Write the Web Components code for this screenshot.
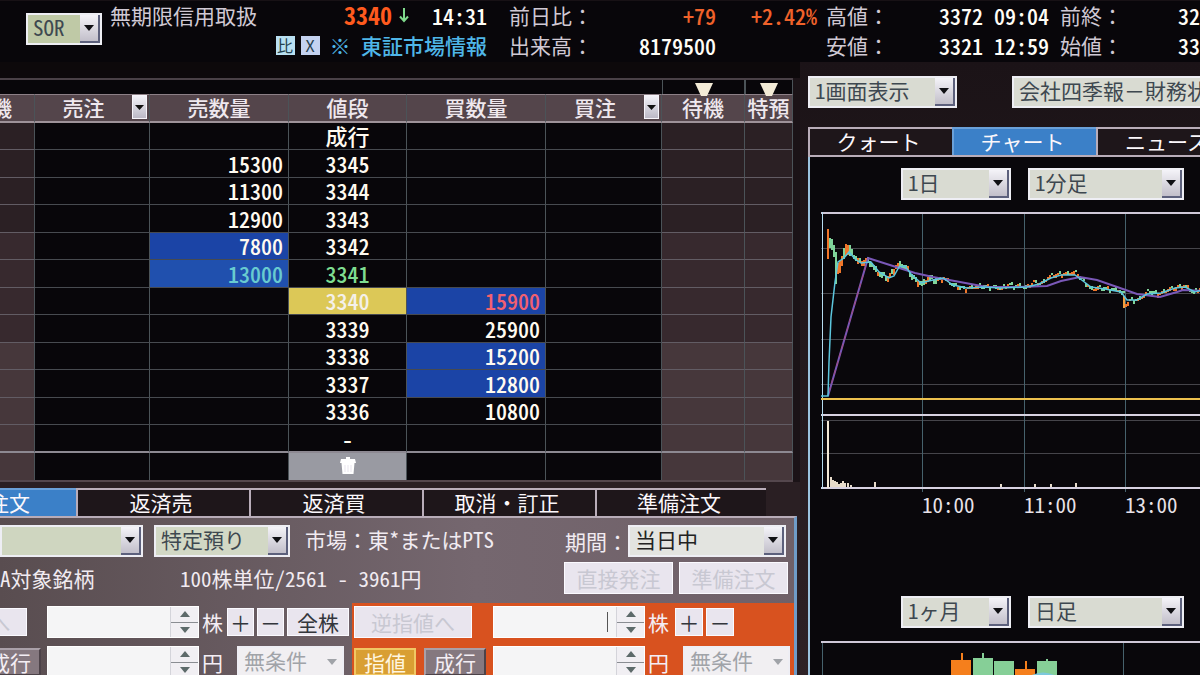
<!DOCTYPE html>
<html lang="ja">
<head>
<meta charset="utf-8">
<title>無期限信用取扱</title>
<style>
  html, body { margin: 0; min-height: 100%; background: #1b1317; }
  body {
    font-family: "Noto Sans CJK JP", "Liberation Sans", sans-serif;
    font-size: 21px; line-height: 28px; color: #d0c9d4;
    font-feature-settings: "hwid";
    overflow: hidden;
  }
</style>
</head>
<body>
<trade-app></trade-app>
<script>
function define(name, render) {
  customElements.define(name, class extends HTMLElement {
    connectedCallback() {
      if (this.shadowRoot) return;
      this.attachShadow({ mode: 'open' }).innerHTML = render(this);
    }
  });
}

/* Drop-down with a raised arrow button; optional caption in front */
define('ui-select', el => `
<style>
  :host { display: flex; align-items: center; flex: none; }
  .box { position: relative; flex: 1; min-width: 0; height: 32px; }
  select {
    appearance: none; box-sizing: border-box; width: 100%; height: 32px; margin: 0;
    border: 2px solid #eeeef4; border-radius: 0; padding: 0 24px 4px 5px;
    background: var(--select-bg, #d9dbd2); color: var(--select-ink, #3e4850);
    font: inherit; line-height: 24px; outline: none; opacity: 1; font-feature-settings: inherit;
  }
  :host([full]) select { font-feature-settings: normal; }
  i {
    position: absolute; right: 2px; top: 2px; bottom: 2px; width: 20px; box-sizing: border-box;
    display: grid; place-items: center; pointer-events: none;
    background: linear-gradient(#f4f3f8, #c2bfca);
    border-right: 2px solid #5c607c; border-bottom: 2px solid #5c607c;
  }
  :host([disabled]) i { background: none; border: 0; }
  label { white-space: nowrap; font-feature-settings: normal; }
</style>
${el.hasAttribute('caption') ? `<label for="s">${el.getAttribute('caption')}</label>` : ''}
<span class="box"><select id="s" aria-label="${el.getAttribute('label') || el.getAttribute('caption')}" ${el.hasAttribute('disabled') ? 'disabled' : ''}><option>${el.getAttribute('value') || ''}</option></select>
<i><svg width="10" height="6"><path d="M0 0H10L5 6Z" fill="${el.hasAttribute('disabled') ? '#a0a3a8' : '#101014'}"/></svg></i></span>`);

/* Number box with stepper buttons and its unit */
define('ui-stepper', el => `
<style>
  :host { display: flex; align-items: center; flex: none; gap: 3px; color: #f4eef4; }
  .box { display: flex; width: 152px; height: 32px; background: #f5f5f6; box-sizing: border-box; border: 1px solid #fff; }
  input { flex: 1; min-width: 0; border: 0; padding: 0 8px; background: none; font: inherit; text-align: right; outline: none; }
  :host([caret]) input { background: linear-gradient(#555, #555) right 8px center / 1px 20px no-repeat; }
  .steps { width: 27px; display: grid; grid-template-rows: 1fr 1fr; row-gap: 1px; background: #8a8d92; border-left: 1px solid #d4d4da; }
  button { border: 0; padding: 0; background: #f1eff3; display: grid; place-items: center; }
</style>
<span class="box"><input id="n" type="text" inputmode="numeric">
<span class="steps"><button aria-label="増やす"><svg width="10" height="6"><path d="M0 6H10L5 0Z" fill="#5d6a6a"/></svg></button><button aria-label="減らす"><svg width="10" height="6"><path d="M0 0H10L5 6Z" fill="#5d6a6a"/></svg></button></span></span>
<label for="n">${el.getAttribute('unit')}</label>`);

define('ui-button', el => `
<style>
  :host { display: block; flex: none; height: 28px; }
  button {
    width: 100%; height: 100%; padding: 0; margin: 0; border: 1px solid #fbfaff; box-sizing: border-box;
    display: grid; place-items: center; font: inherit; line-height: 24px; white-space: nowrap;
    background: #e9e5ee; color: #33363c; font-feature-settings: normal;
  }
  :host([disabled]) button { color: #c8c8d2; }
  :host([kind=amber]) button { background: #d99f33; color: #fff6e0; border: 2px solid #f0c864; }
  :host([kind=grey]) button { background: #85787f; color: #f4eef4; border: 2px solid; border-color: #aaa0a8 #4c4248 #4c4248 #aaa0a8; }
</style>
<button ${el.hasAttribute('disabled') ? 'disabled' : ''}><slot></slot></button>`);

define('ui-tab', el => `
<style>
  :host { display: block; min-width: 0; }
  button {
    width: 100%; height: 28px; box-sizing: border-box; padding: 0 5px 2px 0; margin: 0; font: inherit; line-height: 24px;
    border: 0; border-top: 2px solid #b9adb9; border-left: 2px solid #b9adb9;
    background: #1e161a; color: #fbf7fb; white-space: nowrap; text-align: center;
  }
  :host([active]) button { background: #3b80c8; border-color: #6aa0d8; }
  :host([cut]) button { text-align: right; padding-right: 46px; }
</style>
<button role="tab" aria-selected="${el.hasAttribute('active')}"><slot></slot></button>`);

define('quote-header', () => `
<style>
  :host {
    display: grid; box-sizing: border-box; height: 62px; background: #08060a;
    grid-template-columns: 76px 377px 207px 101px 223px 1fr;
    column-gap: 0; padding-left: 26px; border-top: 1px solid #171115;
  }
  ui-select { --select-bg: #bfc9a6; margin-top: 12px; align-self: start; }
  .cell { display: grid; grid-template-rows: 28px 32px; }
  .main { margin-left: 8px; margin-right: -8px; }
  .a { margin-left: 30px; margin-right: -30px; }
  .c { margin-left: 30px; margin-right: -30px; }
  .d { margin-left: 39px; margin-right: -39px; }
  .e { margin-left: 50px; }
  .line { display: flex; justify-content: space-between; align-items: center; white-space: nowrap; line-height: 28px; }
  .line > span:first-child:not(.n) { font-feature-settings: normal; }
  .end { justify-content: flex-end; }
  b, .n { color: #fffdf6; font-size: 22px; font-weight: 500; }
  .orange { color: #f0622a; }
  .price { color: #ff5a1e; font-size: 24px; font-weight: 700; margin-right: 6px; font-feature-settings: "hwid"; }
  .price-group { display: flex; align-items: center; }
  .time { margin-left: 22px; }
  .news { color: #4fb6e8; font-weight: 500; text-decoration: none; margin-left: 10px; }
  .tag {
    border: 0; padding: 0; width: 19px; height: 19px; margin-left: 6px;
    background: #b9e0f2; color: #24404e; font: inherit; font-size: 16px; line-height: 18px; text-align: center;
  }
  .x { background: #c4d2f0; font-feature-settings: normal; }
</style>
<ui-select label="執行市場" value="SOR"></ui-select>
<div class="cell main">
  <div class="line"><span>無期限信用取扱</span><span class="price-group"><b class="price">3340</b>
    <svg width="12" height="16" viewBox="0 0 12 16"><path d="M6 1V14M2 9.500L6 14L10 9.500" fill="none" stroke="#7fd98c" stroke-width="2"/></svg>
    <span class="n time">14:31</span></span></div>
  <div class="line end"><button class="tag">比</button><button class="tag x">X</button><a class="news" href="#">※ 東証市場情報</a></div>
</div>
<div class="cell a">
  <div class="line"><span>前日比：</span><span class="n orange">+79</span></div>
  <div class="line"><span>出来高：</span><span class="n">8179500</span></div>
</div>
<div class="cell c"><div class="line end"><span class="n orange">+2.42%</span></div></div>
<div class="cell d">
  <div class="line"><span>高値：</span><span class="n">3372 09:04</span></div>
  <div class="line"><span>安値：</span><span class="n">3321 12:59</span></div>
</div>
<div class="cell e">
  <div class="line"><span>前終：</span><span class="n">32</span></div>
  <div class="line"><span>始値：</span><span class="n">33</span></div>
</div>`);

const LADDER = [
  ['', '成行', ''],
  ['15300', '3345', ''], ['11300', '3344', ''], ['12900', '3343', ''],
  ['7800', '3342', '', 'blue'], ['13000', '3341', '', 'azure', 'up'],
  ['', '3340', '15900', '', 'now', 'blue red'],
  ['', '3339', '25900'], ['', '3338', '15200', '', '', 'blue'],
  ['', '3337', '12800', '', '', 'blue'], ['', '3336', '10800'], ['', '-', '']
];

define('price-ladder', () => `
<style>
  :host { display: block; overflow: hidden; padding-top: 16px; background: linear-gradient(#0d090b 0 16px, #1b1317 0); }
  table {
    table-layout: fixed; border-collapse: separate; border-spacing: 0;
    width: calc(100% + 42px); margin-left: -49px; border-top: 2px solid #4a4147;
    border-bottom: 2px solid #54474d; box-sizing: border-box;
    background: #08060a;
  }
  th, td { padding: 0; line-height: 24px; box-sizing: border-box; border-right: 1px solid #4b5358; white-space: nowrap; }
  .marks th { height: 14px; line-height: 0; border-right-color: transparent; vertical-align: bottom; }
  .marks .on { border-right-color: #4b5358; border-left: 1px solid #4b5358; }
  .marks svg { display: block; margin: 0 auto; position: relative; z-index: 1; margin-bottom: -3px; }
  .names th {
    height: 29px; background: #54454b; color: #efe8ee; font-weight: 500;
    border-top: 1px solid #8d8087; border-bottom: 2px solid #9e9299; padding-bottom: 2px;
  }
  .names .cut { text-align: right; padding-right: 22px; }
  .pick { position: relative; }
  .pick span { margin-right: 17px; }
  .pick button {
    position: absolute; right: 2px; top: 0; width: 15px; height: 24px; border: 1px solid #f6f4fa; padding: 0;
    background: linear-gradient(#f3f2f8, #bcb9c6); display: grid; place-items: center;
  }
  tbody td { height: 27px; padding-bottom: 2px; border-bottom: 1px solid #474a50; color: #fffaf0; font-size: 22px; font-weight: 500; text-align: center; }
  tbody tr:nth-child(even) td { height: 28px; }
  tbody .q { text-align: right; padding-right: 5px; }
  tbody .side { background: #2b2024; border-bottom-color: #625c64; }
  tbody tr:nth-child(n+5) .side { background: #37292e; }
  tbody tr:nth-child(n+9) .side { background: #46373b; }
  tbody .blue { background: #1b44a6; }
  tbody .azure { background: #2050ae; color: #68cbd0; }
  tbody .red { color: #f26070; }
  tbody .up { color: #7edc90; }
  tbody .now { background: #dcc857; color: #f4f0ea; }
  tbody tr:nth-child(12) td { border-bottom: 2px solid #8d8992; padding-bottom: 1px; }
  tbody tr:last-child td { border-bottom: 0; }
  tbody .bin { background: #999aa2; }
  .bin svg { display: block; margin: 0 auto; }
</style>
<table>
  <colgroup><col style="width:84px"><col style="width:115px"><col style="width:139px"><col style="width:118px"><col style="width:139px"><col style="width:116px"><col style="width:83px"><col style="width:48px"></colgroup>
  <thead>
    <tr class="marks"><th></th><th></th><th></th><th></th><th></th><th></th>${'<th class="on"><svg width="18" height="14"><path d="M0 0H18L12 13H6Z" fill="#f2ead6"/></svg></th>'.repeat(2)}</tr>
    <tr class="names"><th class="cut">機</th>
      <th class="pick"><span>売注</span><button aria-label="売注"><svg width="9" height="5"><path d="M0 0H9L4.500 5Z" fill="#111"/></svg></button></th>
      <th>売数量</th><th>値段</th><th>買数量</th>
      <th class="pick"><span>買注</span><button aria-label="買注"><svg width="9" height="5"><path d="M0 0H9L4.500 5Z" fill="#111"/></svg></button></th>
      <th>待機</th><th>特預</th></tr>
  </thead>
  <tbody>
    ${LADDER.map(([s, p, b, sc = '', pc = '', bc = '']) => `<tr><td class="side"></td><td></td><td class="q ${sc}">${s}</td><td class="${pc}">${p}</td><td class="q ${bc}">${b}</td><td></td><td class="side"></td><td class="side"></td></tr>`).join('')}
    <tr><td class="side"></td><td></td><td></td><td class="bin"><svg width="16" height="17"><path d="M6 0H10V2H15L16 6H0L1 2H6ZM1.500 6H14.500L13.500 17H2.500Z" fill="#fff"/><path d="M5 8V15M8 8V15M11 8V15" stroke="#e9e5ee"/></svg></td><td></td><td></td><td class="side"></td><td class="side"></td></tr>
  </tbody>
</table>`);

define('order-form', () => `
<style>
  :host { display: block; overflow: hidden; padding-right: 3px; background: #2a1f23; color: #f1ebf1; }
  .tabs { display: grid; grid-template-columns: 173px 173px 173px 173px 171px 1fr; margin-left: -97px; padding-top: 6px; }
  .panel { background: linear-gradient(90deg, #594d50, #75676f 60%, #6f6068); border-top: 2px solid #b8acb8; border-right: 3px solid #6f9cc8; height: 220px; }
  .row { display: flex; align-items: center; white-space: nowrap; }
  .r1 { height: 38px; padding: 4px 8px 0 0; }
  .r1 > span { margin-bottom: 4px; }
  .full { font-feature-settings: normal; }
  .acct { width: 143px; margin-right: 11px; --select-bg: #cfd6c0; }
  .kind { width: 136px; margin-right: 15px; --select-bg: #d2d8c5; }
  .term { width: 221px; margin-left: auto; --select-bg: #e3e4e0; --select-ink: #222; }
  .r2 { height: 34px; padding: 1px 6px 8px 0; gap: 6px; }
  .name { width: 174px; flex: none; }
  .r2 ui-button { width: 109px; height: 32px; }
  .push { margin-left: auto; }
  .sides { display: grid; grid-template-columns: 352px 1fr; }
  .side { display: grid; grid-template-rows: 32px 32px; row-gap: 8px; padding: 3px 2px 12px 0; }
  .buy { background: #d8521f; padding-left: 2px; }
  .left { width: 62px; margin-left: -21px; margin-right: 6px; }
  .left.cut { width: 54px; margin-left: -27px; margin-right: 20px; }
  .pm { width: 28px; margin-right: 3px; }
  .sell .pm { width: 27px; }
  .first { margin-left: 4px; }
  .buy .first { margin-left: 6px; }
  .all { width: 62px; }
  .cond { width: 107px; margin-left: 14px; --select-bg: #f1eff2; --select-ink: #a0a3a8; }
  .back { width: 118px; height: 32px; margin-right: 21px; }
  .fix { width: 62px; margin-right: 8px; }
  .mkt { width: 62px; margin-right: 7px; }
</style>
<div class="tabs" role="tablist"><ui-tab active cut>注文</ui-tab><ui-tab>返済売</ui-tab><ui-tab>返済買</ui-tab><ui-tab>取消・訂正</ui-tab><ui-tab>準備注文</ui-tab></div>
<div class="panel">
  <div class="row r1"><ui-select class="acct" label="取引区分"></ui-select><ui-select class="kind" label="預り区分" value="特定預り"></ui-select><span class="full">市場：</span><span>東*またはPTS</span><ui-select class="term" caption="期間：" value="当日中"></ui-select></div>
  <div class="row r2"><span class="name">A対象銘柄</span><span>100株単位/2561 - 3961円</span><ui-button class="push" disabled>直接発注</ui-button><ui-button disabled>準備注文</ui-button></div>
  <div class="sides">
    <div class="side sell">
      <div class="row"><ui-button class="left cut" disabled>へ</ui-button><ui-stepper unit="株"></ui-stepper><ui-button class="pm first">＋</ui-button><ui-button class="pm">－</ui-button><ui-button class="all">全株</ui-button></div>
      <div class="row"><ui-button class="left" kind="grey">成行</ui-button><ui-stepper unit="円"></ui-stepper><ui-select class="cond" disabled label="執行条件" value="無条件"></ui-select></div>
    </div>
    <div class="side buy">
      <div class="row"><ui-button class="back" disabled>逆指値へ</ui-button><ui-stepper caret unit="株"></ui-stepper><ui-button class="pm first">＋</ui-button><ui-button class="pm">－</ui-button></div>
      <div class="row"><ui-button class="fix" kind="amber">指値</ui-button><ui-button class="mkt" kind="grey">成行</ui-button><ui-stepper unit="円"></ui-stepper><ui-select class="cond" disabled label="執行条件" value="無条件"></ui-select></div>
    </div>
  </div>
</div>`);

/* One-minute price path, [x, y] in chart pixels */
const PATH = [[6,28],[11,33],[15,56],[19,53],[24,36],[29,40],[37,50],[47,49],[56,61],[67,66],[74,55],[79,52],[86,58],[94,69],[101,72],[107,66],[116,69],[122,66],[129,72],[142,77],[159,74],[179,76],[186,73],[206,75],[212,70],[219,72],[229,64],[239,62],[255,61],[261,68],[269,77],[279,76],[296,78],[302,82],[303,93],[309,88],[317,88],[327,79],[337,82],[349,77],[362,74],[372,80],[379,76],[440,74]];
const AVG5 = '0,184 7,184 8,150 10,105 14,70 17,50 23,46 28,40 34,47 40,51 50,50 58,60 68,66 73,64 78,55 84,54 90,62 100,71 112,68 122,66 132,73 146,76 162,75 180,76 206,75 218,72 230,66 240,63 254,63 262,69 270,75 284,77 300,80 306,88 316,88 326,82 340,81 354,76 364,75 374,80 384,77';
const AVG25 = '7,184 47,46 72,54 94,61 112,65 139,70 166,75 196,75 226,74 240,69 259,65 276,68 299,76 316,82 339,85 356,80 362,78 384,79';

function candles() {
  let out = '', seg = 0;
  for (let x = 6, i = 0; x < 400; x += 2, i++) {
    while (seg < PATH.length - 2 && PATH[seg + 1][0] < x) seg++;
    const [x0, y0] = PATH[seg], [x1, y1] = PATH[seg + 1];
    const y = y0 + (y1 - y0) * (x - x0) / (x1 - x0);
    const wide = x < 30 ? 6 : x < 115 ? 3 : 2;
    const a = Math.round(y - wide + (i * 7 % 4) - 1), h = wide * 2 - (i * 5 % 3);
    const rise = y1 < y0 ? i % 4 !== 0 : i % 5 === 0;
    out += `<rect x="${x}" y="${a}" width="2" height="${Math.max(2, h)}" fill="${rise ? '#f0762a' : '#7fd39a'}"/>`;
  }
  return out;
}
const hline = (y, c, w = 1) => `<rect x="0" y="${y}" width="100%" height="${w}" fill="${c}"/>`;
const vline = (x, y, h) => `<rect x="${x}" y="${y}" width="1" height="${h}" fill="#46616c"/>`;

define('minute-chart', () => `
<style>
  :host { display: block; }
  svg { display: block; width: 100%; height: 308px; }
  text { font: inherit; fill: #e8e2e8; }
</style>
<svg role="img" aria-label="1分足チャート">
  ${[36, 81, 127, 172, 208, 241].map(y => hline(y, '#45444a')).join('')}
  ${[101, 203, 304].map(x => vline(x, 2, 278)).join('')}
  ${hline(0, '#cfc8d8', 2)}${hline(202, '#d8d2e2', 2)}${hline(275, '#d8d2e2', 2)}
  <rect x="1" y="0" width="1" height="277" fill="#b6dcf0"/>
  ${hline(186, '#edc14e', 2)}
  <rect x="6" y="17" width="2" height="30" fill="#f0762a"/><rect x="14" y="40" width="2" height="32" fill="#7fd39a"/>
  ${candles()}<rect x="302" y="84" width="2" height="12" fill="#f0a040"/>
  <polyline points="${AVG25}" fill="none" stroke="#7a58b8" stroke-width="2"/>
  <path d="M8 180L46 50" stroke="#a04a80" stroke-width="1" stroke-dasharray="5 4"/>
  <polyline points="${AVG5}" fill="none" stroke="#5cc6de" stroke-width="1.500"/>
  <rect x="6" y="209" width="2" height="67" fill="#f4ead8"/>
  ${[[9,10],[11,7],[13,6],[15,5],[17,3],[19,4],[21,6],[23,4],[26,4],[29,2],[53,5],[179,3],[213,3],[229,3],[254,4]].map(([x, h]) => `<rect x="${x}" y="${275 - h}" width="2" height="${h}" fill="#e8dccb"/>`).join('')}
  <text x="101" y="301">10:00</text><text x="203" y="301">11:00</text><text x="304" y="301">13:00</text>
</svg>`);

define('daily-chart', () => `
<style>
  :host { display: block; }
  svg { display: block; width: 100%; height: 60px; }
</style>
<svg role="img" aria-label="日足チャート">
  ${vline(1, 0, 60)}${vline(302, 0, 60)}${hline(0, '#cfc8d8', 2)}
  <path d="M130 19H150V60H130ZM140 12H142V19H140ZM194 28H214V60H194ZM204 20H206V28H204Z" fill="#f57f1c"/>
  <path d="M152 17H172V60H152ZM161 12H163V17H161ZM173 20H193V60H173ZM216 20H236V60H216ZM225 18H227V20H225Z" fill="#86cf97"/>
  <path d="M210 36Q222 30 234 36" fill="none" stroke="#7cc8dc" stroke-width="3"/>
</svg>`);

define('chart-panel', () => `
<style>
  :host { display: flex; flex-direction: column; overflow: hidden; padding-left: 8px; background: linear-gradient(#1b1317, #302327); }
  .top { display: flex; gap: 55px; padding: 14px 0 19px; }
  .view { width: 149px; }
  .info { width: 240px; }
  .tabs { display: grid; grid-template-columns: 144px 144px 144px; border-bottom: 2px solid #b9adb9; }
  .body { flex: 1; background: #09070b; border-left: 2px solid #9cc4e0; padding: 11px 0 0 11px; }
  .pick { display: flex; gap: 17px; margin-left: 80px; }
  .pick > :first-child { width: 110px; }
  .pick > :last-child { width: 156px; }
  minute-chart { margin-top: 12px; }
  .second { margin-top: 76px; }
  daily-chart { margin-top: 13px; }
</style>
<div class="top"><ui-select class="view" label="画面表示" value="1画面表示"></ui-select><ui-select class="info" full label="企業情報" value="会社四季報－財務状"></ui-select></div>
<div class="tabs" role="tablist"><ui-tab>クォート</ui-tab><ui-tab active>チャート</ui-tab><ui-tab>ニュース</ui-tab></div>
<div class="body">
  <div class="pick"><ui-select label="期間" value="1日"></ui-select><ui-select label="足種" value="1分足"></ui-select></div>
  <minute-chart></minute-chart>
  <div class="pick second"><ui-select label="期間" value="1ヶ月"></ui-select><ui-select label="足種" value="日足"></ui-select></div>
  <daily-chart></daily-chart>
</div>`);

define('trade-app', () => `
<style>
  :host { display: block; height: 100vh; overflow: hidden; }
  main { display: grid; grid-template-columns: minmax(0, 2fr) minmax(0, 1fr); }
</style>
<quote-header></quote-header>
<main>
  <div><price-ladder></price-ladder><order-form></order-form></div>
  <chart-panel></chart-panel>
</main>`);
</script>
</body>
</html>
